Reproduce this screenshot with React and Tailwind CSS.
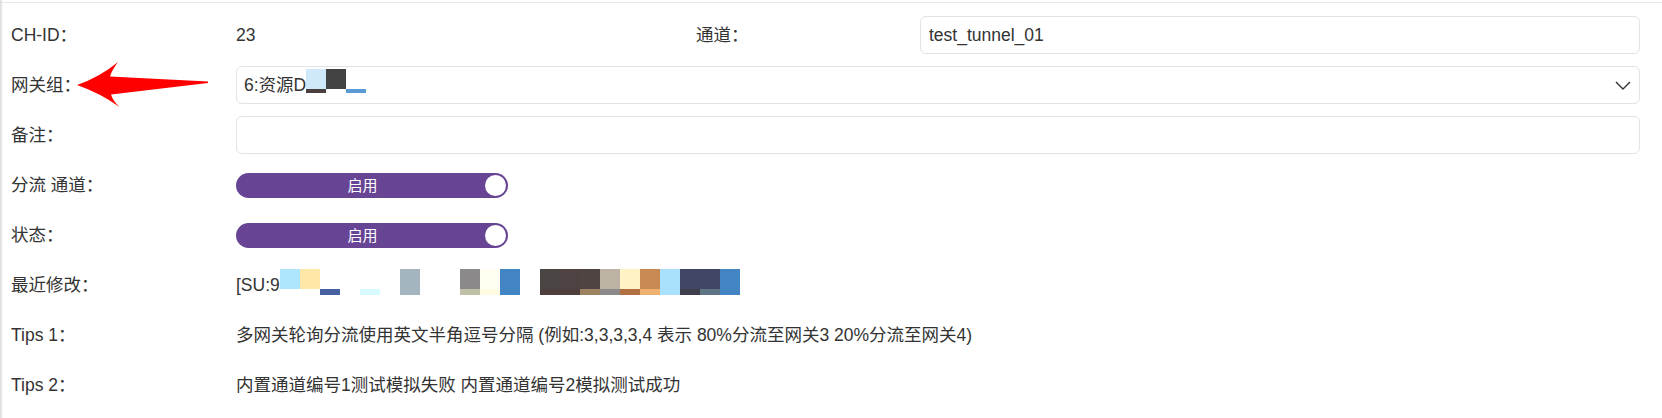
import React from "react";

const selectBlocks = [
  { t: "#cfe9fb", b: "#4a3f3f" },
  { t: "#434343", b: "transparent" },
  { t: "transparent", b: "#5b9bd5" },
];

const modBlocks = [
  { t: "#aee6fd", b: "transparent" },
  { t: "#fde8a8", b: "transparent" },
  { t: "transparent", b: "#4561a0" },
  { t: "transparent", b: "transparent" },
  { t: "transparent", b: "#d7fcff" },
  { t: "transparent", b: "transparent" },
  { t: "#a5b5bf", b: "#a5b5bf" },
  { t: "transparent", b: "transparent" },
  { t: "transparent", b: "transparent" },
  { t: "#8b898a", b: "#c0c0a8" },
  { t: "#fffef0", b: "#fffbe0" },
  { t: "#4285c4", b: "#4285c4" },
  { t: "transparent", b: "transparent" },
  { t: "#4a4443", b: "#4e3f3d" },
  { t: "#4e4342", b: "#4e3f3d" },
  { t: "#4e4542", b: "#9c8360" },
  { t: "#bcb3a4", b: "#8b898a" },
  { t: "#fff2c4", b: "#b07040" },
  { t: "#c88a52", b: "#f0b070" },
  { t: "#a8e0fd", b: "#a8e0fd" },
  { t: "#414566", b: "#3e3f4a" },
  { t: "#414566", b: "#5f7585" },
  { t: "#4385c3", b: "#4385c3" },
];

function Label({ children }) {
  return <div className="w-[236px] shrink-0 pl-[11px]">{children}</div>;
}

function Toggle() {
  return (
    <div className="flex h-[25px] w-[272px] items-center rounded-full bg-[#674594] p-[2px]">
      <div className="flex-1 pl-[2px] text-center text-[15px] leading-none text-white">启用</div>
      <div className="h-[21px] w-[21px] rounded-full bg-white" />
    </div>
  );
}

export default function App() {
  return (
    <div className="relative h-[418px] w-full overflow-hidden bg-white font-['Liberation_Sans','Noto_Sans_CJK_SC',sans-serif] text-[17.5px] text-[#333]">
      <div className="pointer-events-none absolute left-0 top-0 bottom-0 w-[3px] bg-gradient-to-r from-[#d6d6dc] to-transparent" />
      <div className="mt-[2px] border-t border-[#e8e8e8] pr-[22px] pt-[7px]">
        <div className="flex h-[50px] items-center">
          <Label>CH-ID：</Label>
          <div className="w-[460px] shrink-0">23</div>
          <div className="w-[224px] shrink-0">通道：</div>
          <div className="flex h-[38px] flex-1 items-center rounded-[6px] border border-[#e3e3e3] pl-[8px]">test_tunnel_01</div>
        </div>
        <div className="flex h-[50px] items-center">
          <Label>网关组：</Label>
          <div className="flex h-[38px] flex-1 items-center rounded-[6px] border border-[#e3e3e3] pl-[7px] pr-[8px]">
            <span>6:资源D</span>
            <div className="mb-[8px] flex">
              {selectBlocks.map((c, i) => (
                <div key={i} className="flex w-[20px] flex-col">
                  <div className="h-[20px]" style={{ background: c.t }} />
                  <div className="h-[4px]" style={{ background: c.b }} />
                </div>
              ))}
            </div>
            <div className="flex-1" />
            <svg width="16" height="9" viewBox="0 0 16 9" fill="none">
              <path d="M1 1L8 8L15 1" stroke="#333" strokeWidth="1.4" />
            </svg>
          </div>
        </div>
        <div className="flex h-[50px] items-center">
          <Label>备注：</Label>
          <div className="h-[38px] flex-1 rounded-[6px] border border-[#e3e3e3]" />
        </div>
        <div className="flex h-[50px] items-center">
          <Label>分流 通道：</Label>
          <Toggle />
        </div>
        <div className="flex h-[50px] items-center">
          <Label>状态：</Label>
          <Toggle />
        </div>
        <div className="flex h-[50px] items-center">
          <Label>最近修改：</Label>
          <div className="flex items-center">
            <span>[SU:9</span>
            <div className="-mt-[6px] flex">
              {modBlocks.map((c, i) => (
                <div key={i} className="flex w-[20px] flex-col">
                  <div className="h-[20px]" style={{ background: c.t }} />
                  <div className="h-[6px]" style={{ background: c.b }} />
                </div>
              ))}
            </div>
          </div>
        </div>
        <div className="flex h-[50px] items-center">
          <Label>Tips 1：</Label>
          <div>多网关轮询分流使用英文半角逗号分隔 (例如:3,3,3,3,4 表示 80%分流至网关3 20%分流至网关4)</div>
        </div>
        <div className="flex h-[50px] items-center">
          <Label>Tips 2：</Label>
          <div>内置通道编号1测试模拟失败 内置通道编号2模拟测试成功</div>
        </div>
      </div>
      <svg className="pointer-events-none absolute left-[70px] top-[60px]" width="145" height="50" viewBox="0 0 145 50">
        <path
          d="M7 25 Q30 17 48 2 Q42 10 40 16.5 L138 21.5 L138 23 L41 34.5 Q43 41 49.5 47 Q30 33 7 25 Z"
          fill="#ff0000"
        />
      </svg>
    </div>
  );
}
